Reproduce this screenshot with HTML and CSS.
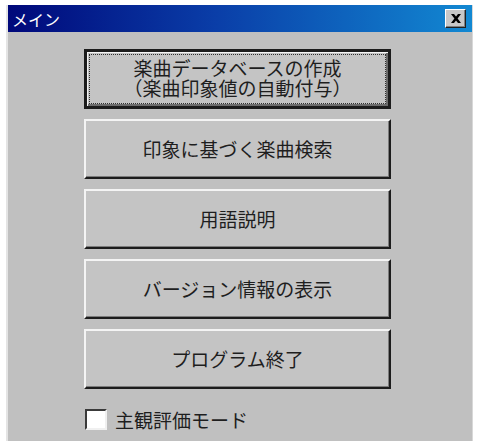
FILE: index.html
```html
<!DOCTYPE html>
<html lang="ja">
<head>
    <meta charset="UTF-8">
    <title>メイン</title>
    <link rel="stylesheet" href="styles.css">
</head>
<body>

    <!-- メインウィンドウ -->
    <div class="window">
        <div class="title-bar">
            <span class="title-text">メイン</span>
            <button class="close-button" aria-label="閉じる">
                <svg width="10" height="9" viewBox="0 0 10 9">
                    <path d="M0 0h3l2 2.6 2-2.6h3l-3.4 4.5 3.4 4.5h-3l-2-2.6-2 2.6h-3l3.4-4.5z" fill="#000"/>
                </svg>
            </button>
        </div>

        <div class="window-body">
            <div class="menu-buttons">
                <button class="menu-button default">
                    <span class="focus-rect">
                        <span class="line">楽曲データベースの作成</span>
                        <span class="line">（楽曲印象値の自動付与）</span>
                    </span>
                </button>
                <button class="menu-button"><span class="label">印象に基づく楽曲検索</span></button>
                <button class="menu-button"><span class="label">用語説明</span></button>
                <button class="menu-button"><span class="label">バージョン情報の表示</span></button>
                <button class="menu-button"><span class="label">プログラム終了</span></button>
            </div>

            <label class="check-row">
                <span class="check-box"></span>
                <span class="check-label">主観評価モード</span>
            </label>
        </div>
    </div>

</body>
</html>
```

FILE: styles.css
```css
/* 全体 */
body {
    margin: 0;
    background-color: #ffffff;
    font-family: "Noto Sans CJK JP", "Noto Sans", sans-serif;
    color: #1e1e1e;
}

/* ウィンドウ枠 */
.window {
    margin: 5px 0 0 8px;
    width: 464px;
    height: 436px;
    background-color: #c0c0c0;
    box-shadow: -2px 0 0 #e4e4e4, 1px 0 0 #d8d8d8;
}

/* タイトルバー */
.title-bar {
    height: 27px;
    display: flex;
    align-items: center;
    justify-content: space-between;
    padding: 0 6px 0 4px;
    background: linear-gradient(to right, #00087a, #0a3ea8 45%, #1288d2);
}

.title-text {
    color: #ffffff;
    font-size: 16px;
}

.close-button {
    width: 21px;
    height: 19px;
    padding: 0;
    display: flex;
    align-items: center;
    justify-content: center;
    background-color: #c8c8c8;
    border: 1px solid;
    border-color: #ffffff #202020 #202020 #ffffff;
    box-shadow: inset -1px -1px 0 #808080;
}

/* 本体 */
.window-body {
    padding: 17px 0 0 76px;
}

.menu-buttons {
    display: flex;
    flex-direction: column;
    gap: 10px;
}

.menu-button {
    width: 307px;
    height: 60px;
    padding: 0;
    display: flex;
    align-items: center;
    justify-content: center;
    font-family: inherit;
    font-size: 19px;
    color: #1e1e1e;
    background-color: #c4c4c4;
    border: 2px solid;
    border-color: #f4f4f4 #1c1c1c #1c1c1c #f4f4f4;
    box-shadow: inset -1px -1px 0 #7c7c7c;
    cursor: pointer;
}

/* 既定ボタン（黒枠＋フォーカス点線） */
.menu-button.default {
    border: 3px solid #1c1c1c;
    box-shadow: inset 1px 1px 0 #f4f4f4, inset -2px -2px 0 #6c6c6c;
    padding: 2px;
}

.focus-rect {
    width: 100%;
    height: 100%;
    box-sizing: border-box;
    border: 1px dotted #303030;
    display: flex;
    flex-direction: column;
    align-items: center;
    justify-content: center;
    padding-bottom: 2px;
}

.line {
    display: block;
    line-height: 20px;
}

.label {
    line-height: 20px;
}

/* チェックボックス */
.check-row {
    display: flex;
    align-items: center;
    gap: 8px;
    margin-top: 17px;
    margin-left: 1px;
}

.check-box {
    width: 18px;
    height: 17px;
    background-color: #ffffff;
    border: 2px solid;
    border-color: #3a3a3a #f0f0f0 #f0f0f0 #3a3a3a;
}

.check-label {
    font-size: 19px;
}
```
